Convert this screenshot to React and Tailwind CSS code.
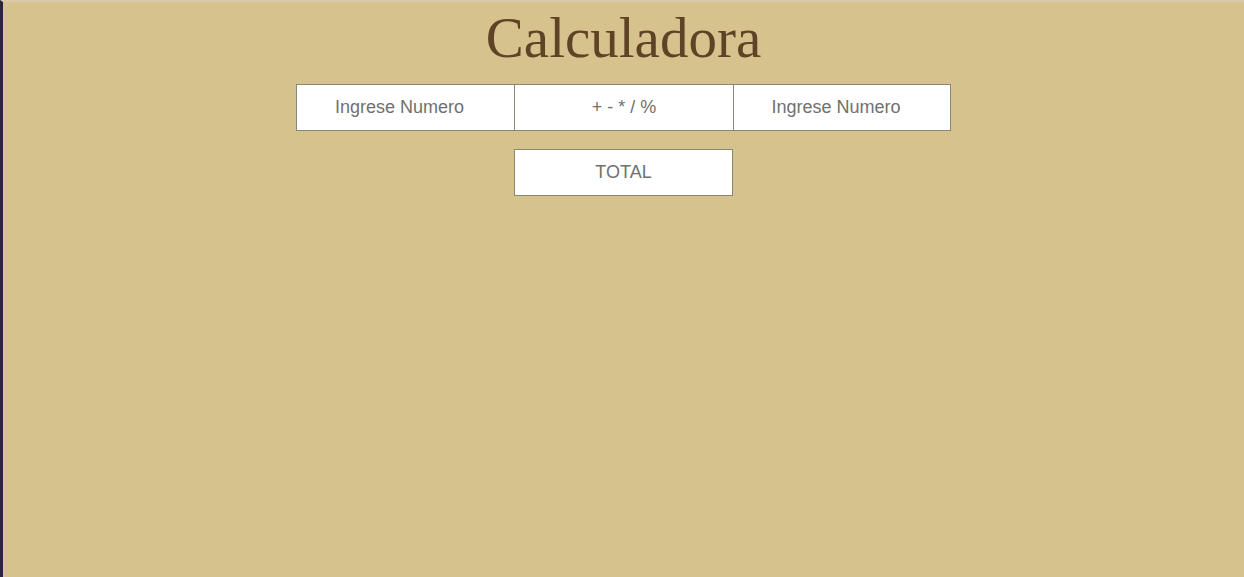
import React from "react";

export default function App() {
  const box =
    "h-[47px] bg-white border border-[#8c8678] text-center text-[18px] text-[#707070] placeholder:text-[#707070] outline-none";
  return (
    <div className="min-h-[577px] w-full bg-[#d6c28c] border-l-[3px] border-l-[#2b2340] border-t-2 border-t-[#d9cba8] flex flex-col items-center font-['Liberation_Sans',Arial,sans-serif]">
      <h1 className="font-['Liberation_Serif','Times_New_Roman',serif] text-[57px] leading-[64px] text-[#5e4426] mt-[4px]">
        Calculadora
      </h1>
      <div className="flex mt-[14px]">
        <input className={box + " w-[219px] pr-[12px]"} placeholder="Ingrese Numero" />
        <input className={box + " w-[219px] border-l-0"} placeholder="+ - * / %" />
        <input className={box + " w-[217px] border-l-0 pr-[12px]"} placeholder="Ingrese Numero" />
      </div>
      <button className={box + " w-[219px] mt-[18px]"}>TOTAL</button>
    </div>
  );
}
